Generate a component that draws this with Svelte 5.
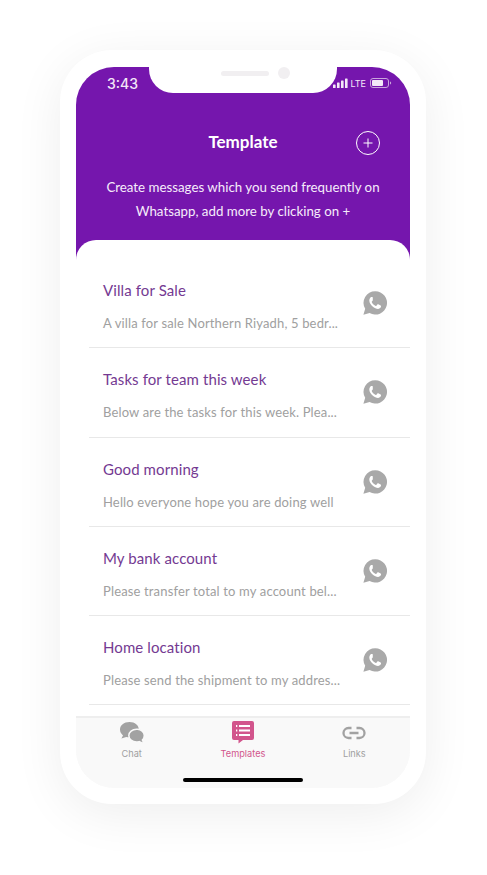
<script>
    const templates = [
        { title: "Villa for Sale", body: "A villa for sale Northern Riyadh, 5 bedr..." },
        { title: "Tasks for team this week", body: "Below are the tasks for this week. Plea..." },
        { title: "Good morning", body: "Hello everyone hope you are doing well" },
        { title: "My bank account", body: "Please transfer total to my account bel..." },
        { title: "Home location", body: "Please send the shipment to my addres..." }
    ]
</script>

<div class="page">
    <div class="phone">
        <div class="screen">
            <div class="notch">
                <span class="speaker"></span>
                <span class="camera"></span>
            </div>

            <div class="top">
                <div class="status">
                    <span class="time">3:43</span>
                    <div class="status-right">
                        <svg width="15" height="10" viewBox="0 0 15 10">
                            <rect x="0" y="6.5" width="2.6" height="3.5" rx=".6" />
                            <rect x="4" y="4.5" width="2.6" height="5.5" rx=".6" />
                            <rect x="8" y="2.5" width="2.6" height="7.5" rx=".6" />
                            <rect x="12" y="0.5" width="2.6" height="9.5" rx=".6" />
                        </svg>
                        <span class="lte">LTE</span>
                        <svg width="22" height="10" viewBox="0 0 22 10">
                            <rect x=".5" y=".5" width="18" height="9" rx="2.5" fill="none" stroke="#c9a5dc" />
                            <rect x="2" y="2" width="11" height="6" rx="1" />
                            <path d="M20 3.5c.8.3 1.2.8 1.2 1.5s-.4 1.2-1.2 1.5z" fill="#c9a5dc" />
                        </svg>
                    </div>
                </div>

                <div class="head">
                    <h1>Template</h1>
                    <button class="add" aria-label="Add template">
                        <svg width="10" height="10" viewBox="0 0 10 10">
                            <path d="M5 .5v9M.5 5h9" stroke="#fff" stroke-width="1" fill="none" />
                        </svg>
                    </button>
                </div>
                <p class="desc">Create messages which you send frequently on<br>Whatsapp, add more by clicking on +</p>
            </div>

            <div class="list">
                {#each templates as t}
                    <div class="row">
                        <div class="texts">
                            <div class="title">{t.title}</div>
                            <div class="body">{t.body}</div>
                        </div>
                        <svg class="wa" width="24" height="24" viewBox="0 0 24 24">
                            <path d="M12.300.2A11.700 11.700 0 0 0 2.200 17.800L.4 23.800l6.200-1.700A11.700 11.700 0 1 0 12.300.2z" fill="#a9a9a9" />
                            <path d="M8.700 5.900c-.4 0-.8.1-1.200.6-.5.6-1.200 1.500-1.200 3 0 2.200 1.600 4.400 3.300 6 1.700 1.600 3.700 2.500 5.400 2.500 1.300 0 2.500-.8 2.900-1.900.2-.6.2-1.100.1-1.300-.2-.3-2.300-1.400-2.800-1.500-.4-.1-.6 0-.8.3l-1 1.200c-.2.2-.4.2-.7.1-1.600-.7-3.100-2-3.900-3.700-.1-.3 0-.5.1-.6l.8-1c.2-.3.2-.5.1-.8L9.800 6.500c-.2-.5-.5-.6-1.100-.6z" fill="#fff" />
                        </svg>
                    </div>
                {/each}
            </div>

            <nav class="tabs">
                <div class="tab">
                    <svg width="26" height="24" viewBox="0 0 26 24">
                        <path d="M10.500 1C5 1 1 4.300 1 8.600c0 2.300 1.100 4.300 3 5.800L2.400 17.500l4.800-1.600c1 .3 2 .4 3.300.4 5.500 0 9.300-3.400 9.300-7.700S16 1 10.500 1z" fill="#a2a2a2" />
                        <path d="M17.500 8.200c-4.200 0-7.700 2.900-7.700 6.400 0 3.500 3.500 6.400 7.700 6.400.9 0 1.800-.1 2.600-.4l4.900 2.200-1.600-3.800c1.200-1.100 1.900-2.700 1.900-4.400 0-3.500-3.200-6.400-6.800-6.400z" fill="#a2a2a2" stroke="#f9f9f9" stroke-width="1.500" />
                    </svg>
                    <span>Chat</span>
                </div>
                <div class="tab active">
                    <svg width="22" height="24" viewBox="0 0 22 24">
                        <path d="M2 0h18a2 2 0 0 1 2 2v15a2 2 0 0 1-2 2h-9l-4.500 3.500V19H2a2 2 0 0 1-2-2V2a2 2 0 0 1 2-2z" fill="#d2558c" />
                        <path d="M7 5h11M7 9.500h11M7 14h11" stroke="#fff" stroke-width="1.800" fill="none" />
                        <path d="M4 5h1.300M4 9.500h1.300M4 14h1.300" stroke="#fff" stroke-width="1.800" fill="none" />
                    </svg>
                    <span>Templates</span>
                </div>
                <div class="tab">
                    <svg width="24" height="24" viewBox="0 0 24 24">
                        <path d="M9.500 7H6.500a5 5 0 0 0 0 10h3M14.500 7h3a5 5 0 0 1 0 10h-3M7.500 12h9" stroke="#a2a2a2" stroke-width="2.300" fill="none" />
                    </svg>
                    <span>Links</span>
                </div>
            </nav>
            <div class="home-bar"></div>
        </div>
    </div>
</div>

<style>
    :global(body) {
        background: #fff;
    }

    .page {
        width: 487px;
        height: 875px;
        padding: 50px 0 0 60px;
        box-sizing: border-box;
        overflow: hidden;
        font-family: "Lato", sans-serif;
    }

    .phone {
        width: 366px;
        height: 754px;
        box-sizing: border-box;
        padding: 17px 16px 16px;
        background: #fff;
        border-radius: 52px;
        box-shadow: 0 10px 50px rgba(0, 0, 0, 0.07);
    }

    .screen {
        position: relative;
        height: 100%;
        display: flex;
        flex-direction: column;
        background: #f9f9f9;
        border-radius: 38px;
        overflow: hidden;
    }

    .top {
        background: #7516ad;
        padding-bottom: 37px;
    }

    .notch {
        position: absolute;
        top: 0;
        left: 73px;
        width: 188px;
        height: 26px;
        background: #fff;
        border-radius: 0 0 24px 24px;
    }

    .speaker {
        position: absolute;
        left: 72px;
        top: 4px;
        width: 48px;
        height: 5px;
        border-radius: 3px;
        background: #f1eff1;
    }

    .camera {
        position: absolute;
        left: 129px;
        top: 0;
        width: 12px;
        height: 12px;
        border-radius: 50%;
        background: #f1eff1;
    }

    .status {
        display: flex;
        justify-content: space-between;
        align-items: center;
        height: 32px;
        padding: 0 18px 0 31px;
        color: #f3e8f8;
        box-sizing: border-box;
    }

    .time {
        font-family: "Inter", sans-serif;
        font-size: 14px;
        font-weight: 500;
    }

    .status-right {
        display: flex;
        align-items: center;
        gap: 3px;
        fill: #f3e8f8;
    }

    .lte {
        font-family: "Inter", sans-serif;
        font-size: 9px;
        margin-right: 1px;
    }

    .head {
        position: relative;
        height: 36px;
        margin-top: 24px;
        display: flex;
        align-items: center;
        justify-content: center;
    }

    h1 {
        margin: 0;
        font-size: 17px;
        font-weight: 700;
        color: #fff;
    }

    .add {
        position: absolute;
        right: 30px;
        top: 8px;
        width: 24px;
        height: 24px;
        padding: 0;
        display: flex;
        align-items: center;
        justify-content: center;
        background: none;
        border: 1px solid #fff;
        border-radius: 50%;
    }

    .desc {
        margin: 16px 0 0;
        font-size: 13.3px;
        line-height: 24px;
        text-align: center;
        color: #f6ecfb;
    }

    .list {
        flex: 1;
        margin-top: -20px;
        padding-top: 19px;
        background: #fff;
        border-radius: 20px 20px 0 0;
    }

    .row {
        display: flex;
        align-items: center;
        justify-content: space-between;
        height: 89.25px;
        box-sizing: border-box;
        margin-left: 13px;
        padding: 0 23px 0 14px;
        border-bottom: 1px solid #e8e8e8;
    }

    .texts {
        margin-top: 6px;
    }

    .title {
        font-size: 15px;
        letter-spacing: 0.1px;
        color: #743a92;
    }

    .body {
        margin-top: 16px;
        font-size: 13px;
        letter-spacing: 0.15px;
        color: #a0a0a0;
    }

    .wa {
        flex: none;
    }

    .tabs {
        display: flex;
        justify-content: space-between;
        flex: none;
        height: 72px;
        box-sizing: border-box;
        padding: 3px 0 0;
        background: #f9f9f9;
        border-top: 2px solid #eeeeee;
    }

    .tab {
        width: 111.33px;
        display: flex;
        flex-direction: column;
        align-items: center;
        font-family: "Inter", sans-serif;
        font-size: 9.2px;
        color: #a0a0a0;
    }

    .tab svg {
        height: 24px;
        margin-bottom: 3px;
    }

    .tab.active {
        color: #d2558c;
    }

    .home-bar {
        position: absolute;
        left: 107px;
        bottom: 6px;
        width: 120px;
        height: 4px;
        border-radius: 2px;
        background: #000;
    }
</style>
